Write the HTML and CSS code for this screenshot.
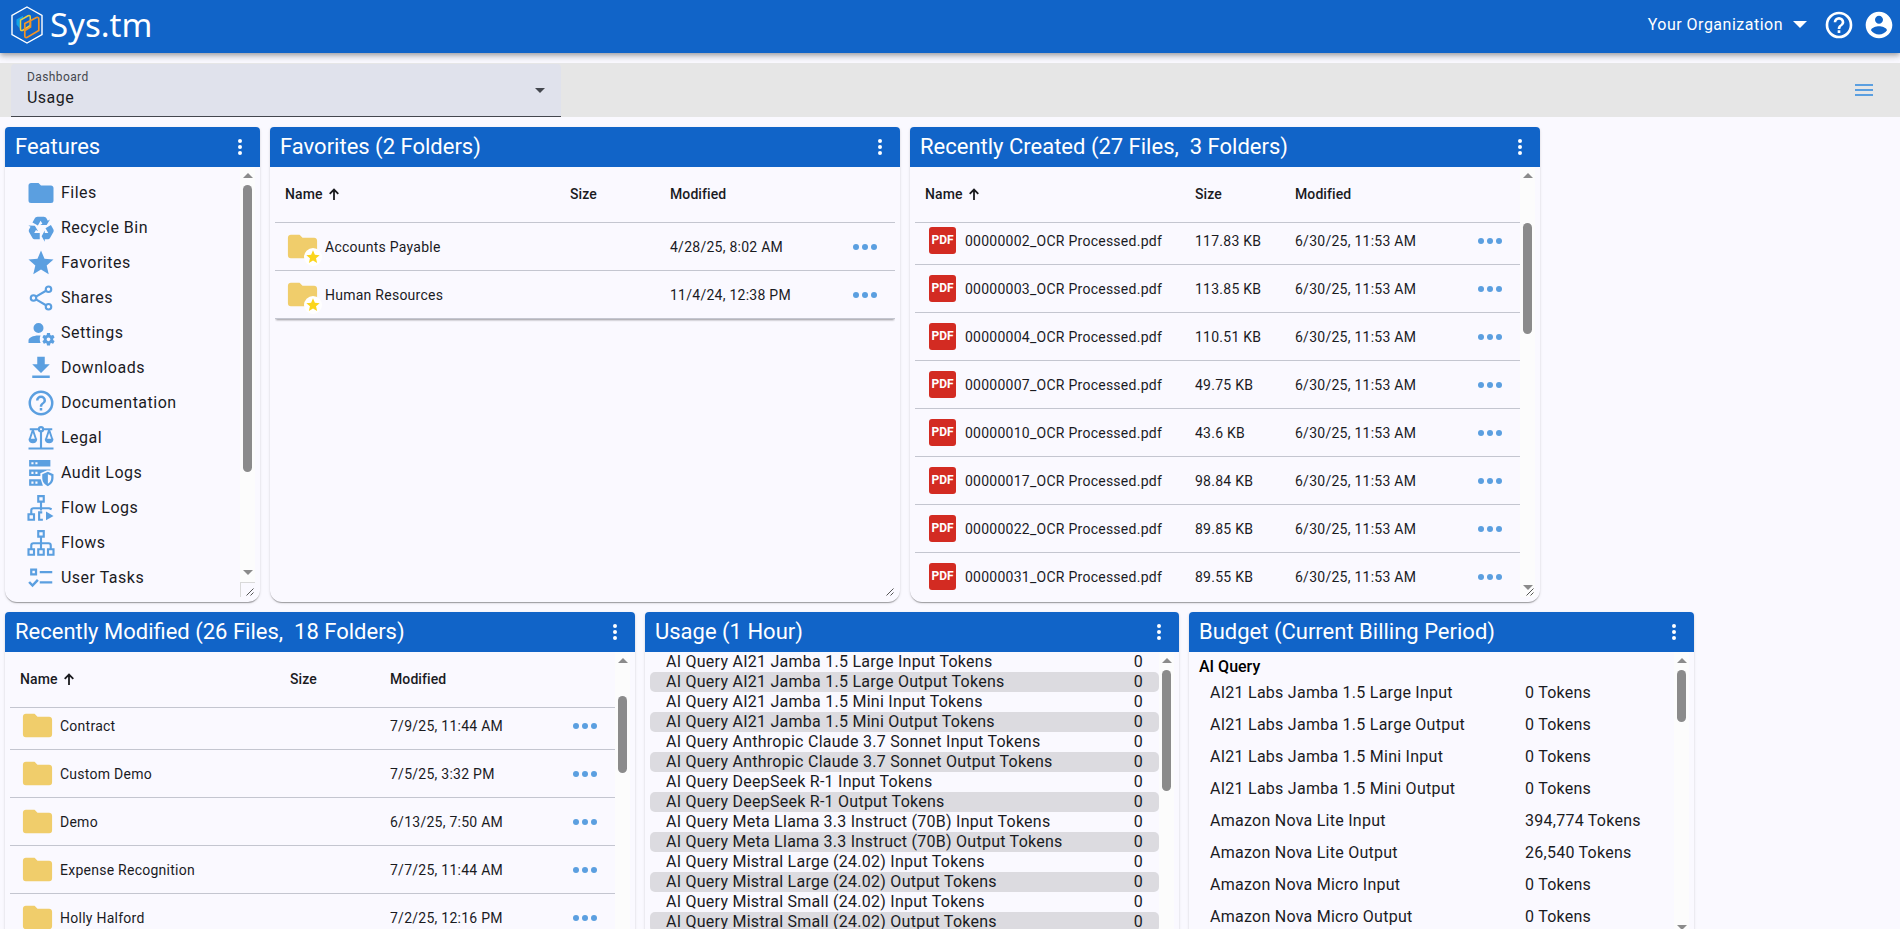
FILE: index.html
```
<!DOCTYPE html>
<html lang="en">
<head>
  <meta charset="UTF-8" />
  <meta name="viewport" content="width=device-width, initial-scale=1.0"/>
  <title>Sys.tm - Dashboard</title>
  <link rel="stylesheet" href="styles.css">
</head>
<body>
  <!-- shared icons -->
  <svg class="icon-defs" aria-hidden="true">
    <symbol id="i-folder" viewBox="0 0 24 24"><path d="M10,4H4C2.89,4 2,4.89 2,6V18A2,2 0 0,0 4,20H20A2,2 0 0,0 22,18V8C22,6.89 21.1,6 20,6H12L10,4Z"/></symbol>
    <symbol id="i-recycle" viewBox="0 0 24 24"><path d="M21.82,15.42L19.32,19.75C18.83,20.61 17.92,21.06 17,21H15V23L12.5,18.5L15,14V16H17.82L15.6,12.15L19.93,9.65L21.73,12.77C22.25,13.54 22.32,14.57 21.82,15.42M9.21,3.06H14.21C15.19,3.06 16.04,3.63 16.45,4.45L17.45,6.19L19.18,5.19L16.54,9.6L11.39,9.69L13.12,8.69L11.71,6.24L9.5,10.09L5.16,7.59L6.96,4.47C7.37,3.64 8.22,3.06 9.21,3.06M5.05,19.76L2.55,15.43C2.06,14.58 2.13,13.56 2.64,12.79L3.64,11.06L1.91,10.06L7.05,10.14L9.7,14.56L7.97,13.56L6.56,16H11V21H7.4C6.47,21.07 5.55,20.61 5.05,19.76Z"/></symbol>
    <symbol id="i-star" viewBox="0 0 24 24"><path d="M12,17.27L18.18,21L16.54,13.97L22,9.24L14.81,8.62L12,2L9.19,8.62L2,9.24L7.45,13.97L5.82,21L12,17.27Z"/></symbol>
    <symbol id="i-share" viewBox="0 0 24 24"><g fill="none" stroke="currentColor" stroke-width="1.7"><circle cx="18" cy="5" r="2.2"/><circle cx="6" cy="12" r="2.2"/><circle cx="18" cy="19" r="2.2"/><path d="M8 10.9L16 6.2M8 13.1L16 17.8"/></g></symbol>
    <symbol id="i-account-cog" viewBox="0 0 24 24"><path d="M10 4A4 4 0 0 0 6 8A4 4 0 0 0 10 12A4 4 0 0 0 14 8A4 4 0 0 0 10 4M17 12C16.87 12 16.76 12.09 16.74 12.21L16.55 13.53C16.25 13.66 15.96 13.82 15.7 14L14.46 13.5C14.35 13.5 14.22 13.5 14.15 13.63L13.15 15.36C13.09 15.47 13.11 15.6 13.21 15.68L14.27 16.5C14.25 16.67 14.24 16.83 14.24 17C14.24 17.17 14.25 17.33 14.27 17.5L13.21 18.32C13.12 18.4 13.09 18.53 13.15 18.64L14.15 20.37C14.21 20.5 14.34 20.5 14.46 20.5L15.7 20C15.96 20.18 16.24 20.35 16.55 20.47L16.74 21.79C16.76 21.91 16.86 22 17 22H19C19.11 22 19.22 21.91 19.24 21.79L19.43 20.47C19.73 20.34 20 20.18 20.27 20L21.5 20.5C21.63 20.5 21.76 20.5 21.83 20.37L22.83 18.64C22.89 18.53 22.86 18.4 22.77 18.32L21.7 17.5C21.72 17.33 21.74 17.17 21.74 17C21.74 16.83 21.73 16.67 21.7 16.5L22.76 15.68C22.85 15.6 22.88 15.47 22.82 15.36L21.82 13.63C21.76 13.5 21.63 13.5 21.5 13.5L20.27 14C20 13.82 19.73 13.65 19.42 13.53L19.23 12.21C19.22 12.09 19.11 12 19 12H17M10 14C5.58 14 2 15.79 2 18V20H11.68A7 7 0 0 1 11 17A7 7 0 0 1 11.64 14.09C11.11 14.03 10.56 14 10 14M18 15.5C18.83 15.5 19.5 16.17 19.5 17C19.5 17.83 18.83 18.5 18 18.5C17.16 18.5 16.5 17.83 16.5 17C16.5 16.17 17.17 15.5 18 15.5Z"/></symbol>
    <symbol id="i-download" viewBox="0 0 24 24"><path d="M5,20H19V18H5M19,9H15V3H9V9H5L12,16L19,9Z"/></symbol>
    <symbol id="i-help" viewBox="0 0 24 24"><path d="M11,18H13V16H11V18M12,2A10,10 0 0,0 2,12A10,10 0 0,0 12,22A10,10 0 0,0 22,12A10,10 0 0,0 12,2M12,20C7.59,20 4,16.41 4,12C4,7.59 7.59,4 12,4C16.41,4 20,7.59 20,12C20,16.41 16.41,20 12,20M12,6A4,4 0 0,0 8,10H10A2,2 0 0,1 12,8A2,2 0 0,1 14,10C14,12 11,11.75 11,15H13C13,12.75 16,12.5 16,10A4,4 0 0,0 12,6Z"/></symbol>
    <symbol id="i-scale" viewBox="0 0 24 24"><g fill="none" stroke="currentColor" stroke-width="1.7"><circle cx="12" cy="5" r="1.7"/><path d="M3 5H10M14 5H21M12 7V20M2 20.4H22"/><path d="M5.5 5.5L3 13M5.5 5.5L8 13M18.5 5.5L16 13M18.5 5.5L21 13" stroke-width="1.5"/></g><path d="M2 12.500H9C9 15 7.500 16.200 5.500 16.200S2 15 2 12.500M15 12.500H22C22 15 20.500 16.200 18.500 16.200S15 15 15 12.500"/></symbol>
    <symbol id="i-server" viewBox="0 0 24 24"><path fill-rule="evenodd" d="M2.5 1.5H19.5V6.700H2.500ZM4.300 3.300V5H6V3.300ZM7.500 3.300V5H9.200V3.300ZM2.500 9.200H19.500V10L17 9.800L11.500 12.200V14.400H2.500ZM4.300 11V12.700H6V11ZM7.500 11V12.700H9.200V11ZM2.500 17H11.800L13.500 22.200H2.500ZM4.300 18.800V20.500H6V18.800ZM7.500 18.800V20.500H9.200V18.800Z"/><path fill-rule="evenodd" d="M17.500 11L22 13V16C22 19 20 21.500 17.500 22.500C15 21.500 13 19 13 16V13ZM17.500 13V20.500C19 19.700 20.200 18 20.200 16V14.200Z"/></symbol>
    <symbol id="i-flow" viewBox="0 0 24 24"><g fill="none" stroke="currentColor" stroke-width="1.7"><path d="M9.800 2.500H14.200V6.900H9.800ZM2 17H6.400V21.400H2ZM9.800 17H14.200V21.400H9.800ZM17.600 17H22V21.400H17.600ZM12 7V17M4.200 17V14Q4.200 12.200 6 12.200H18Q19.800 12.200 19.800 14V17"/></g></symbol>
    <symbol id="i-flow-log" viewBox="0 0 24 24"><g fill="none" stroke="currentColor" stroke-width="1.7"><path d="M9.800 2.500H14.200V6.900H9.800ZM2 17H6.400V21.400H2ZM12 7V14M4.200 17V14Q4.200 12.200 6 12.200H18.500L20.500 13M13 15.500H10.500V21.400H13.500"/></g><path d="M16 14.800L22 18.300L16 21.800Z"/></symbol>
    <symbol id="i-tasks" viewBox="0 0 24 24"><g fill="none" stroke="currentColor"><path d="M4.200 5.300H8V9.100H4.200Z" stroke-width="1.8"/><path d="M11 7.300H21M11 15.500H21" stroke-width="1.8"/><path d="M2.500 15.200L5.200 18L9.500 13.500" stroke-width="2"/></g></symbol>
    <symbol id="i-dots-v" viewBox="0 0 24 24"><path d="M12,16A2,2 0 0,1 14,18A2,2 0 0,1 12,20A2,2 0 0,1 10,18A2,2 0 0,1 12,16M12,10A2,2 0 0,1 14,12A2,2 0 0,1 12,14A2,2 0 0,1 10,12A2,2 0 0,1 12,10M12,4A2,2 0 0,1 14,6A2,2 0 0,1 12,8A2,2 0 0,1 10,6A2,2 0 0,1 12,4Z"/></symbol>
    <symbol id="i-dots-h" viewBox="0 0 24 6"><circle cx="3" cy="3" r="3"/><circle cx="12" cy="3" r="3"/><circle cx="21" cy="3" r="3"/></symbol>
    <symbol id="i-sort" viewBox="0 0 10 12"><path d="M5 12V1.500M0.700 5.800L5 1.500L9.300 5.800" fill="none" stroke="currentColor" stroke-width="1.8"/></symbol>
    <symbol id="i-grip" viewBox="0 0 8 8"><path d="M0.500 7.500L7.500 0.500M4.500 7.500L7.500 4.500" stroke="#555" stroke-width="1" fill="none"/></symbol>
  </svg>

  <header class="toolbar">
    <a href="#" class="brand">
      <svg class="brand-logo" viewBox="0 0 32 38">
        <path d="M16 1L31 9.500V28.500L16 37L1 28.500V9.500Z" stroke="#fff" stroke-width="1.4"/>
        <path class="solid" d="M5.500 13.500L12 9.800V12.500L8.800 14.500V22.500L5.500 18.500Z" fill="#12a5e8"/>
        <path d="M9.500 14.200L17 9.800Q19.300 9 19.300 11.200V19.500L11.500 24.500Q9.500 25 9.500 23Z" stroke="#e8cf45" stroke-width="1.5"/>
        <path d="M13.800 17.500L25.500 11.500Q27.800 11 27.800 13V24.500L16 31.500Q13.800 32 13.800 30ZM14 24.500L19.500 21V15" stroke="#f39325" stroke-width="1.7"/>
      </svg>
      <span>Sys.tm</span>
    </a>
    <div class="toolbar-actions">
      <button class="org-button">Your Organization
        <svg width="14" height="7" viewBox="0 0 14 7"><path d="M0 0H14L7 7Z"/></svg>
      </button>
      <button class="icon-button" aria-label="Help"><svg width="32" height="32"><use href="#i-help"/></svg></button>
      <button class="icon-button" aria-label="Account"><svg width="32" height="32" viewBox="0 0 24 24"><path d="M12 2C6.48 2 2 6.48 2 12s4.48 10 10 10 10-4.48 10-10S17.52 2 12 2zm0 3c1.66 0 3 1.34 3 3s-1.34 3-3 3-3-1.34-3-3 1.34-3 3-3zm0 14.2c-2.5 0-4.71-1.28-6-3.22.03-1.99 4-3.08 6-3.08 1.99 0 5.97 1.09 6 3.08-1.29 1.94-3.5 3.22-6 3.22z"/></svg></button>
    </div>
  </header>

  <div class="subbar">
    <div class="field">
      <label for="dashboard">Dashboard</label>
      <select id="dashboard"><option>Usage</option></select>
      <svg class="field-arrow" width="10" height="5" viewBox="0 0 10 5"><path d="M0 0H10L5 5Z"/></svg>
    </div>
    <button class="icon-button menu-button" aria-label="Menu"><svg width="24" height="24" viewBox="0 0 24 24"><path d="M3,6H21V8H3V6M3,11H21V13H3V11M3,16H21V18H3V16Z"/></svg></button>
  </div>

  <main class="dashboard">

    <section class="panel panel-features">
      <div class="panel-header">
        <h2>Features</h2>
        <button class="icon-button" aria-label="Features menu"><svg width="24" height="24"><use href="#i-dots-v"/></svg></button>
      </div>
      <div class="panel-body">
        <nav class="panel-content feature-list">
          <a href="#"><svg><use href="#i-folder"/></svg>Files</a>
          <a href="#"><svg><use href="#i-recycle"/></svg>Recycle Bin</a>
          <a href="#"><svg><use href="#i-star"/></svg>Favorites</a>
          <a href="#"><svg><use href="#i-share"/></svg>Shares</a>
          <a href="#"><svg><use href="#i-account-cog"/></svg>Settings</a>
          <a href="#"><svg><use href="#i-download"/></svg>Downloads</a>
          <a href="#"><svg><use href="#i-help"/></svg>Documentation</a>
          <a href="#"><svg><use href="#i-scale"/></svg>Legal</a>
          <a href="#"><svg><use href="#i-server"/></svg>Audit Logs</a>
          <a href="#"><svg><use href="#i-flow-log"/></svg>Flow Logs</a>
          <a href="#"><svg><use href="#i-flow"/></svg>Flows</a>
          <a href="#"><svg><use href="#i-tasks"/></svg>User Tasks</a>
        </nav>
        <div class="scrollbar has-corner"><div class="thumb"></div></div>
      </div>
      <svg class="grip"><use href="#i-grip"/></svg>
    </section>

    <section class="panel panel-files">
      <div class="panel-header">
        <h2>Favorites (2 Folders)</h2>
        <button class="icon-button" aria-label="Favorites menu"><svg width="24" height="24"><use href="#i-dots-v"/></svg></button>
      </div>
      <div class="panel-body">
        <div class="panel-content">
          <table class="file-table short">
            <thead>
              <tr><th>Name <svg class="sort"><use href="#i-sort"/></svg></th><th class="col-size">Size</th><th class="col-date">Modified</th><th class="col-more"></th></tr>
            </thead>
            <tbody>
              <tr><td><div class="file"><span class="file-icon"><svg class="folder"><use href="#i-folder"/></svg><span class="badge"><svg><use href="#i-star"/></svg></span></span>Accounts Payable</div></td><td></td><td>4/28/25, 8:02 AM</td><td><button class="more" aria-label="More"><svg><use href="#i-dots-h"/></svg></button></td></tr>
              <tr><td><div class="file"><span class="file-icon"><svg class="folder"><use href="#i-folder"/></svg><span class="badge"><svg><use href="#i-star"/></svg></span></span>Human Resources</div></td><td></td><td>11/4/24, 12:38 PM</td><td><button class="more" aria-label="More"><svg><use href="#i-dots-h"/></svg></button></td></tr>
            </tbody>
          </table>
        </div>
      </div>
      <svg class="grip"><use href="#i-grip"/></svg>
    </section>

    <section class="panel panel-files panel-created">
      <div class="panel-header">
        <h2>Recently Created (27 Files,&nbsp; 3 Folders)</h2>
        <button class="icon-button" aria-label="Recently created menu"><svg width="24" height="24"><use href="#i-dots-v"/></svg></button>
      </div>
      <div class="panel-body">
        <div class="panel-content">
          <table class="file-table scrolled">
            <thead>
              <tr><th>Name <svg class="sort"><use href="#i-sort"/></svg></th><th class="col-size">Size</th><th class="col-date">Modified</th><th class="col-more"></th></tr>
            </thead>
            <tbody>
              <tr><td><div class="file"><span class="file-icon"><span class="pdf">PDF</span></span>00000002_OCR Processed.pdf</div></td><td>117.83 KB</td><td>6/30/25, 11:53 AM</td><td><button class="more" aria-label="More"><svg><use href="#i-dots-h"/></svg></button></td></tr>
              <tr><td><div class="file"><span class="file-icon"><span class="pdf">PDF</span></span>00000003_OCR Processed.pdf</div></td><td>113.85 KB</td><td>6/30/25, 11:53 AM</td><td><button class="more" aria-label="More"><svg><use href="#i-dots-h"/></svg></button></td></tr>
              <tr><td><div class="file"><span class="file-icon"><span class="pdf">PDF</span></span>00000004_OCR Processed.pdf</div></td><td>110.51 KB</td><td>6/30/25, 11:53 AM</td><td><button class="more" aria-label="More"><svg><use href="#i-dots-h"/></svg></button></td></tr>
              <tr><td><div class="file"><span class="file-icon"><span class="pdf">PDF</span></span>00000007_OCR Processed.pdf</div></td><td>49.75 KB</td><td>6/30/25, 11:53 AM</td><td><button class="more" aria-label="More"><svg><use href="#i-dots-h"/></svg></button></td></tr>
              <tr><td><div class="file"><span class="file-icon"><span class="pdf">PDF</span></span>00000010_OCR Processed.pdf</div></td><td>43.6 KB</td><td>6/30/25, 11:53 AM</td><td><button class="more" aria-label="More"><svg><use href="#i-dots-h"/></svg></button></td></tr>
              <tr><td><div class="file"><span class="file-icon"><span class="pdf">PDF</span></span>00000017_OCR Processed.pdf</div></td><td>98.84 KB</td><td>6/30/25, 11:53 AM</td><td><button class="more" aria-label="More"><svg><use href="#i-dots-h"/></svg></button></td></tr>
              <tr><td><div class="file"><span class="file-icon"><span class="pdf">PDF</span></span>00000022_OCR Processed.pdf</div></td><td>89.85 KB</td><td>6/30/25, 11:53 AM</td><td><button class="more" aria-label="More"><svg><use href="#i-dots-h"/></svg></button></td></tr>
              <tr><td><div class="file"><span class="file-icon"><span class="pdf">PDF</span></span>00000031_OCR Processed.pdf</div></td><td>89.55 KB</td><td>6/30/25, 11:53 AM</td><td><button class="more" aria-label="More"><svg><use href="#i-dots-h"/></svg></button></td></tr>
            </tbody>
          </table>
        </div>
        <div class="scrollbar"><div class="thumb"></div></div>
      </div>
      <svg class="grip"><use href="#i-grip"/></svg>
    </section>

    <section class="panel panel-files panel-modified">
      <div class="panel-header">
        <h2>Recently Modified (26 Files,&nbsp; 18 Folders)</h2>
        <button class="icon-button" aria-label="Recently modified menu"><svg width="24" height="24"><use href="#i-dots-v"/></svg></button>
      </div>
      <div class="panel-body">
        <div class="panel-content">
          <table class="file-table scrolled">
            <thead>
              <tr><th>Name <svg class="sort"><use href="#i-sort"/></svg></th><th class="col-size">Size</th><th class="col-date">Modified</th><th class="col-more"></th></tr>
            </thead>
            <tbody>
              <tr><td><div class="file"><span class="file-icon"><svg class="folder"><use href="#i-folder"/></svg></span>Contract</div></td><td></td><td>7/9/25, 11:44 AM</td><td><button class="more" aria-label="More"><svg><use href="#i-dots-h"/></svg></button></td></tr>
              <tr><td><div class="file"><span class="file-icon"><svg class="folder"><use href="#i-folder"/></svg></span>Custom Demo</div></td><td></td><td>7/5/25, 3:32 PM</td><td><button class="more" aria-label="More"><svg><use href="#i-dots-h"/></svg></button></td></tr>
              <tr><td><div class="file"><span class="file-icon"><svg class="folder"><use href="#i-folder"/></svg></span>Demo</div></td><td></td><td>6/13/25, 7:50 AM</td><td><button class="more" aria-label="More"><svg><use href="#i-dots-h"/></svg></button></td></tr>
              <tr><td><div class="file"><span class="file-icon"><svg class="folder"><use href="#i-folder"/></svg></span>Expense Recognition</div></td><td></td><td>7/7/25, 11:44 AM</td><td><button class="more" aria-label="More"><svg><use href="#i-dots-h"/></svg></button></td></tr>
              <tr><td><div class="file"><span class="file-icon"><svg class="folder"><use href="#i-folder"/></svg></span>Holly Halford</div></td><td></td><td>7/2/25, 12:16 PM</td><td><button class="more" aria-label="More"><svg><use href="#i-dots-h"/></svg></button></td></tr>
            </tbody>
          </table>
        </div>
        <div class="scrollbar"><div class="thumb"></div></div>
      </div>
    </section>

    <section class="panel panel-usage">
      <div class="panel-header">
        <h2>Usage (1 Hour)</h2>
        <button class="icon-button" aria-label="Usage menu"><svg width="24" height="24"><use href="#i-dots-v"/></svg></button>
      </div>
      <div class="panel-body">
        <div class="panel-content">
          <table class="usage-table">
            <tr><td>AI Query AI21 Jamba 1.5 Large Input Tokens</td><td>0</td></tr>
            <tr><td>AI Query AI21 Jamba 1.5 Large Output Tokens</td><td>0</td></tr>
            <tr><td>AI Query AI21 Jamba 1.5 Mini Input Tokens</td><td>0</td></tr>
            <tr><td>AI Query AI21 Jamba 1.5 Mini Output Tokens</td><td>0</td></tr>
            <tr><td>AI Query Anthropic Claude 3.7 Sonnet Input Tokens</td><td>0</td></tr>
            <tr><td>AI Query Anthropic Claude 3.7 Sonnet Output Tokens</td><td>0</td></tr>
            <tr><td>AI Query DeepSeek R-1 Input Tokens</td><td>0</td></tr>
            <tr><td>AI Query DeepSeek R-1 Output Tokens</td><td>0</td></tr>
            <tr><td>AI Query Meta Llama 3.3 Instruct (70B) Input Tokens</td><td>0</td></tr>
            <tr><td>AI Query Meta Llama 3.3 Instruct (70B) Output Tokens</td><td>0</td></tr>
            <tr><td>AI Query Mistral Large (24.02) Input Tokens</td><td>0</td></tr>
            <tr><td>AI Query Mistral Large (24.02) Output Tokens</td><td>0</td></tr>
            <tr><td>AI Query Mistral Small (24.02) Input Tokens</td><td>0</td></tr>
            <tr><td>AI Query Mistral Small (24.02) Output Tokens</td><td>0</td></tr>
          </table>
        </div>
        <div class="scrollbar"><div class="thumb"></div></div>
      </div>
    </section>

    <section class="panel panel-budget">
      <div class="panel-header">
        <h2>Budget (Current Billing Period)</h2>
        <button class="icon-button" aria-label="Budget menu"><svg width="24" height="24"><use href="#i-dots-v"/></svg></button>
      </div>
      <div class="panel-body">
        <div class="panel-content">
          <h3>AI Query</h3>
          <table class="budget-table">
            <tr><td>AI21 Labs Jamba 1.5 Large Input</td><td>0 Tokens</td></tr>
            <tr><td>AI21 Labs Jamba 1.5 Large Output</td><td>0 Tokens</td></tr>
            <tr><td>AI21 Labs Jamba 1.5 Mini Input</td><td>0 Tokens</td></tr>
            <tr><td>AI21 Labs Jamba 1.5 Mini Output</td><td>0 Tokens</td></tr>
            <tr><td>Amazon Nova Lite Input</td><td>394,774 Tokens</td></tr>
            <tr><td>Amazon Nova Lite Output</td><td>26,540 Tokens</td></tr>
            <tr><td>Amazon Nova Micro Input</td><td>0 Tokens</td></tr>
            <tr><td>Amazon Nova Micro Output</td><td>0 Tokens</td></tr>
          </table>
        </div>
        <div class="scrollbar"><div class="thumb"></div></div>
      </div>
    </section>

  </main>
</body>
</html>
```

FILE: styles.css
```
* {
  box-sizing: border-box;
}

html, body {
  margin: 0;
  padding: 0;
  height: 100%;
  overflow: hidden;
}

body {
  display: flex;
  flex-direction: column;
  background: #faf9ff;
  color: #1a1b1f;
  font-family: Roboto, sans-serif;
  font-size: 16px;
  letter-spacing: 0.031rem;
}

h2, h3 {
  margin: 0;
}

svg {
  display: block;
  fill: currentColor;
}

.icon-defs {
  display: none;
}

button {
  border: none;
  padding: 0;
  background: none;
  color: inherit;
  font: inherit;
  letter-spacing: inherit;
  cursor: pointer;
}

/* Top toolbar */
.toolbar {
  flex: none;
  display: flex;
  align-items: center;
  justify-content: space-between;
  height: 53px;
  padding: 0 5px 4px 11px;
  background: #1164c8;
  color: #fff;
  box-shadow: 0 2px 4px -1px rgba(0,0,0,0.2), 0 4px 5px rgba(0,0,0,0.14), 0 1px 10px rgba(0,0,0,0.12);
}
.brand {
  display: flex;
  align-items: center;
  gap: 7px;
  color: #fff;
  text-decoration: none;
  font-family: "Noto Sans", sans-serif;
  font-size: 33px;
  line-height: 40px;
  letter-spacing: 0;
}
.brand-logo {
  width: 32px;
  height: 38px;
  fill: none;
}
.toolbar-actions {
  display: flex;
  align-items: center;
  gap: 8px;
}
.org-button {
  display: flex;
  align-items: center;
  gap: 10px;
  margin-right: 8px;
}

/* Dashboard picker */
.subbar {
  flex: none;
  display: flex;
  align-items: center;
  justify-content: space-between;
  height: 54px;
  margin-top: 10px;
  padding: 0 24px 0 11px;
  background: #e6e6e6;
}
.field {
  position: relative;
  display: flex;
  flex-direction: column;
  gap: 1px;
  width: 550px;
  height: 53px;
  padding: 5px 16px 0;
  background: #e0e2ec;
  border-bottom: 1px solid #44474e;
  border-radius: 4px 4px 0 0;
}
.field label {
  color: #44474e;
  font-size: 12px;
  line-height: 16px;
  letter-spacing: 0.025rem;
}
.field select {
  appearance: none;
  border: none;
  padding: 0;
  height: 24px;
  background: none;
  color: #1a1b1f;
  font: inherit;
  letter-spacing: inherit;
}
.field-arrow {
  position: absolute;
  right: 16px;
  top: 24px;
  color: #44474e;
}
.menu-button {
  color: #5b9fe0;
}

/* Panels */
.dashboard {
  flex: 1;
  display: flex;
  flex-wrap: wrap;
  align-content: flex-start;
  align-items: flex-start;
  gap: 10px;
  padding: 10px 5px 0;
  min-height: 0;
  overflow: hidden;
}
.panel {
  position: relative;
  display: flex;
  flex-direction: column;
  height: 475px;
  padding-bottom: 5px;
  border-radius: 4px 4px 12px 12px;
  box-shadow: 0 2px 1px -1px rgba(0,0,0,0.2), 0 1px 1px rgba(0,0,0,0.14), 0 1px 3px rgba(0,0,0,0.12);
}
.panel-features { width: 255px; }
.panel-files { width: 630px; }
.panel-usage { width: 534px; }
.panel-budget { width: 505px; height: 330px; }

.panel-header {
  flex: none;
  display: flex;
  align-items: center;
  justify-content: space-between;
  height: 40px;
  padding: 0 8px 0 10px;
  background: #1164c8;
  color: #fff;
  border-radius: 4px 4px 0 0;
}
.panel-header h2 {
  font-size: 22px;
  line-height: 28px;
  font-weight: 400;
  letter-spacing: 0;
}
.panel-body {
  flex: 1;
  display: flex;
  min-height: 0;
  padding: 0 5px;
}
.panel-content {
  flex: 1;
  min-width: 0;
  overflow: hidden;
}
.grip {
  position: absolute;
  right: 6px;
  bottom: 6px;
  width: 8px;
  height: 8px;
}

/* Scrollbars */
.scrollbar {
  flex: none;
  display: flex;
  flex-direction: column;
  align-items: center;
  width: 15px;
  padding: 6px 3px 7px;
  background: #fcfcfc;
}
.scrollbar::before,
.scrollbar::after {
  content: "";
  width: 0;
  border: solid transparent;
  border-width: 0 5px 5px;
  border-bottom-color: #8b8b8b;
}
.scrollbar::after {
  margin-top: auto;
  border-width: 5px 5px 0;
  border-top-color: #8b8b8b;
}
.thumb {
  width: 9px;
  margin-top: 7px;
  border-radius: 5px;
  background: #8b8b8b;
}
.has-corner {
  margin-bottom: 15px;
  box-shadow: 0 1px 0 #d9d9d9;
}
.panel-features .thumb { height: 287px; }
.panel-created .thumb { height: 111px; margin-top: 45px; }
.panel-modified .thumb { height: 77px; margin-top: 33px; }
.panel-usage .thumb { height: 121px; }
.panel-budget .thumb { height: 52px; }

/* Resize corner under the scrollbar */
.panel-features .grip {
  right: 5px;
  bottom: 5px;
  width: 15px;
  height: 14px;
  padding: 5px 1px 1px 5px;
  border-left: 1px solid #d9d9d9;
}

/* Features */
.feature-list {
  padding-top: 8px;
}
.feature-list a {
  display: flex;
  align-items: center;
  gap: 5px;
  height: 35px;
  padding-left: 16px;
  color: inherit;
  text-decoration: none;
}
.feature-list svg {
  width: 30px;
  height: 30px;
  color: #5b9fe0;
}

/* File tables */
.file-table {
  width: 100%;
  table-layout: fixed;
  border-collapse: separate;
  border-spacing: 0;
  font-size: 14px;
  line-height: 20px;
  letter-spacing: 0.016rem;
}
.file-table th,
.file-table td {
  height: 48px;
  padding: 0;
  border-bottom: 1px solid #c4c6d0;
  text-align: left;
}
.file-table th {
  height: 56px;
  padding-bottom: 2px;
  font-weight: 500;
  letter-spacing: 0.006rem;
}
.file-table th:first-child,
.file-table td:first-child {
  padding-left: 10px;
}
.col-size { width: 100px; }
.col-date { width: 165px; }
.col-more { width: 60px; }
.file-table.short {
  box-shadow: 0 2px 2px -1px rgba(0,0,0,0.4);
}
/* first row is partly under the header */
.file-table.scrolled tbody tr:first-child td {
  height: 42px;
  padding-bottom: 6px;
}
.sort {
  display: inline-block;
  width: 10px;
  height: 12px;
  margin-left: 3px;
  vertical-align: -1px;
}
.file {
  display: flex;
  align-items: center;
  gap: 5px;
}
.file-icon {
  position: relative;
  display: flex;
  justify-content: center;
  width: 35px;
}
.folder {
  width: 35px;
  height: 35px;
  margin: -4px 0;
  color: #f0cd6b;
}
.badge {
  position: absolute;
  right: -2px;
  bottom: -6px;
  width: 18px;
  height: 18px;
  padding: 1px;
  border-radius: 50%;
  background: #fff;
}
.badge svg {
  width: 16px;
  height: 16px;
  color: #fbd51c;
}
.pdf {
  width: 27px;
  height: 27px;
  border-radius: 3px;
  background: #d32b22;
  color: #fff;
  font-family: "Liberation Sans Narrow", Roboto, sans-serif;
  font-size: 12px;
  line-height: 27px;
  font-weight: 700;
  letter-spacing: 0;
  text-align: center;
}
.more {
  display: block;
  margin: 0 auto;
  color: #5b9fe0;
}
.more svg {
  width: 24px;
  height: 6px;
}

/* Usage */
.usage-table {
  width: 100%;
  border-spacing: 0;
  letter-spacing: 0.016rem;
}
.usage-table td {
  height: 20px;
  padding: 0 16px;
  line-height: 20px;
}
.usage-table td:last-child {
  text-align: right;
}
.usage-table tr:nth-child(even) td {
  background: #dcdbe0;
}
.usage-table td:first-child { border-radius: 5px 0 0 5px; }
.usage-table td:last-child { border-radius: 0 5px 5px 0; }

/* Budget */
.panel-budget h3 {
  padding: 5px 5px 0;
  color: #000;
  font-size: 16px;
  line-height: 19px;
  font-weight: 500;
  letter-spacing: 0;
}
.budget-table {
  width: 100%;
  border-spacing: 0;
  letter-spacing: 0.016rem;
}
.budget-table td {
  width: 149px;
  height: 32px;
  padding: 0;
}
.budget-table td:first-child {
  width: auto;
  padding-left: 16px;
}
```
